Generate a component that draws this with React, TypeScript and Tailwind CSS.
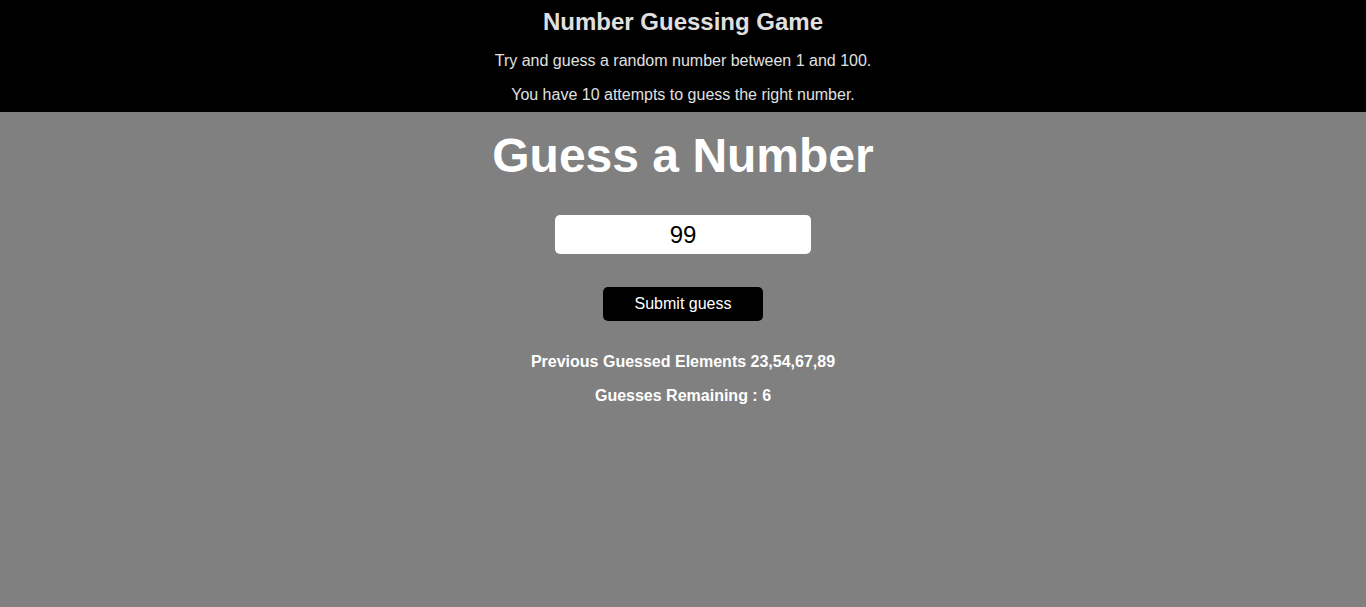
import { useState } from "react";

export default function App() {
    const [guess, setGuess] = useState("99");
    const previous = [23, 54, 67, 89];
    const remaining = 6;

    return (
        <div className="min-h-[607px] bg-[#808080] font-['Liberation_Sans',Arial,sans-serif] text-center">
            {/* Header */}
            <div className="bg-black text-[#e0e0e0] pt-[8px] pb-[8px]">
                <h2 className="text-[24px] font-bold leading-[28px]">Number Guessing Game</h2>
                <p className="mt-[16px] text-[16px] leading-[18px]">Try and guess a random number between 1 and 100.</p>
                <p className="mt-[16px] text-[16px] leading-[18px]">You have 10 attempts to guess the right number.</p>
            </div>

            {/* Game */}
            <div className="flex flex-col items-center text-white">
                <h1 className="mt-[16px] text-[48px] font-bold leading-[55px]">Guess a Number</h1>
                <input
                    type="text"
                    value={guess}
                    onChange={(e) => setGuess(e.target.value)}
                    className="mt-[32px] w-[256px] h-[39px] rounded-[5px] bg-white text-black text-[24px] text-center outline-none"
                />
                <button className="mt-[33px] w-[160px] h-[34px] rounded-[5px] bg-black text-white text-[16px]">
                    Submit guess
                </button>
                <p className="mt-[32px] text-[16px] font-bold leading-[18px]">
                    Previous Guessed Elements {previous.join(",")}
                </p>
                <p className="mt-[16px] text-[16px] font-bold leading-[18px]">Guesses Remaining : {remaining}</p>
            </div>
        </div>
    );
}
